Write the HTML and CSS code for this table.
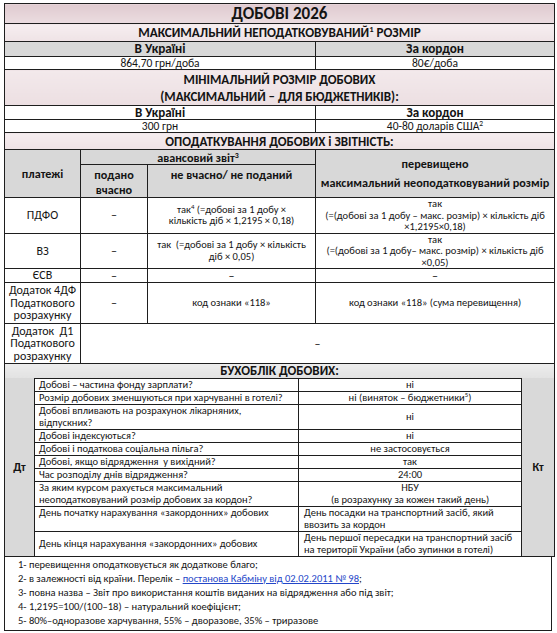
FILE: index.html
```html
<!DOCTYPE html>
<html lang="uk">
<head>
<meta charset="utf-8">
<title>Добові 2026</title>
<link rel="stylesheet" href="styles.css">
</head>
<body>
<div class="sheet">
  <table class="t">
    <colgroup><col class="w-ua"><col class="w-ab"></colgroup>
    <tr class="r-title"><td colspan="2">ДОБОВІ 2026</td></tr>
    <tr class="r-h1"><td colspan="2">МАКСИМАЛЬНИЙ НЕПОДАТКОВУВАНИЙ<sup>1</sup> РОЗМІР</td></tr>
    <tr class="r-grey"><td>В Україні</td><td>За кордон</td></tr>
    <tr class="r-val"><td>864,70 грн/доба</td><td>80€/доба</td></tr>
    <tr class="r-h2"><td colspan="2">МІНІМАЛЬНИЙ РОЗМІР ДОБОВИХ<br>(МАКСИМАЛЬНИЙ – ДЛЯ БЮДЖЕТНИКІВ):</td></tr>
    <tr class="r-sub"><td>В Україні</td><td>За кордон</td></tr>
    <tr class="r-val"><td>300 грн</td><td>40-80 доларів США<sup>2</sup></td></tr>
    <tr class="r-h3"><td colspan="2">ОПОДАТКУВАННЯ ДОБОВИХ і ЗВІТНІСТЬ:</td></tr>
  </table>

  <table class="t tax">
    <colgroup><col class="w-pay"><col class="w-ontime"><col class="w-late"><col class="w-over"></colgroup>
    <tr class="r-th1">
      <td rowspan="2" class="th">платежі</td>
      <td colspan="2" class="th adv">авансовий звіт<sup>3</sup></td>
      <td rowspan="2" class="th over-h"><span class="l1">перевищено</span><span class="l2">максимальний неоподатковуваний розмір</span></td>
    </tr>
    <tr class="r-th2">
      <td class="th top">подано<br>вчасно</td>
      <td class="th top">не вчасно/ не поданий</td>
    </tr>
    <tr class="r-pdfo">
      <td class="name">ПДФО</td>
      <td class="dash">–</td>
      <td class="small">так<sup>4</sup> (=добові за 1 добу ×<br>кількість діб × 1,2195 × 0,18)</td>
      <td class="small">так<br>(=(добові за 1 добу – макс. розмір) × кількість діб<br>×1,2195×0,18)</td>
    </tr>
    <tr class="r-vz">
      <td class="name">ВЗ</td>
      <td class="dash">–</td>
      <td class="small">так &nbsp;(=добові за 1 добу × кількість<br>діб × 0,05)</td>
      <td class="small">так<br>(=(добові за 1 добу– макс. розмір) × кількість діб<br>×0,05)</td>
    </tr>
    <tr class="r-esv">
      <td class="name">ЄСВ</td>
      <td class="dash">–</td>
      <td class="dash">–</td>
      <td class="dash">–</td>
    </tr>
    <tr class="r-4df">
      <td class="name">Додаток 4ДФ Податкового розрахунку</td>
      <td class="dash">–</td>
      <td class="small">код ознаки «118»</td>
      <td class="small">код ознаки «118» (сума перевищення)</td>
    </tr>
    <tr class="r-d1">
      <td class="name">Додаток &nbsp;Д1 Податкового розрахунку</td>
      <td colspan="3" class="dash">–</td>
    </tr>
  </table>

  <table class="t book">
    <colgroup><col class="w-dt"><col class="w-q"><col class="w-a"><col class="w-kt"></colgroup>
    <tr class="r-bh"><td colspan="4">БУХОБЛІК ДОБОВИХ:</td></tr>
    <tr class="r1">
      <td rowspan="10" class="side">Дт</td>
      <td class="q">Добові – частина фонду зарплати?</td>
      <td class="a">ні</td>
      <td rowspan="10" class="side">Кт</td>
    </tr>
    <tr class="r1"><td class="q">Розмір добових зменшуються при харчуванні в готелі?</td><td class="a">ні (виняток – бюджетники<sup>5</sup>)</td></tr>
    <tr class="r2"><td class="q">Добові впливають на розрахунок лікарняних,<br>відпускних?</td><td class="a">ні</td></tr>
    <tr class="r1"><td class="q">Добові індексуються?</td><td class="a">ні</td></tr>
    <tr class="r1"><td class="q">Добові і податкова соціальна пільга?</td><td class="a">не застосовується</td></tr>
    <tr class="r1"><td class="q">Добові, якщо відрядження &nbsp;у вихідний?</td><td class="a">так</td></tr>
    <tr class="r1"><td class="q">Час розподілу днів відрядження?</td><td class="a">24:00</td></tr>
    <tr class="r2"><td class="q">За яким курсом рахується максимальний<br>неоподатковуваний розмір добових за кордон?</td><td class="a">НБУ<br>(в розрахунку за кожен такий день)</td></tr>
    <tr class="r2"><td class="q qtop">День початку нарахування «закордонних» добових</td><td class="a al">День посадки на транспортний засіб, який<br>ввозить за кордон</td></tr>
    <tr class="r2"><td class="q">День кінця нарахування «закордонних» добових</td><td class="a al">День першої пересадки на транспортний засіб<br>на території України (або зупинки в готелі)</td></tr>
  </table>

  <div class="notes">
    <p>1- перевищення оподатковується як додаткове благо;</p>
    <p>2- в залежності від країни. Перелік – <a href="#">постанова Кабміну від 02.02.2011 № 98</a>;</p>
    <p>3- повна назва – Звіт про використання коштів виданих на відрядження або під звіт;</p>
    <p>4- 1,2195=100/(100–18) – натуральний коефіцієнт;</p>
    <p>5- 80%–одноразове харчування, 55% – дворазове, 35% – триразове</p>
  </div>
</div>
</body>
</html>
```

FILE: styles.css
```css
* { box-sizing: border-box; }
html, body { margin: 0; padding: 0; background: #fff; }
body {
  padding: 3px 0 0 4px;
  font-family: Carlito, "Liberation Sans", Arial, sans-serif;
  color: #141414;
  font-size: 11px;
}
.sheet { width: 550px; }

.t {
  width: 100%;
  border-collapse: collapse;
  table-layout: fixed;
}
.t td {
  border: 1px solid #1e1e1e;
  padding: 0 3px;
  text-align: center;
  vertical-align: middle;
  line-height: 12px;
  overflow: hidden;
}
.t + .t tr:first-child > td { border-top: 0; }
sup { font-size: 65%; line-height: 0; vertical-align: 0.6em; }

/* top section */
.w-ua { width: 311px; }
.w-ab { width: 239px; }
.r-title td {
  height: 20px;
  font-size: 17px;
  line-height: 19px;
  font-weight: bold;
  background: linear-gradient(#e0cbd0, #ebdce0);
}
.r-h1 td {
  height: 18px;
  font-size: 13.2px;
  line-height: 16px;
  font-weight: bold;
  background: linear-gradient(#f6eef0, #efe3e6);
}
.r-grey td {
  height: 15px;
  font-size: 13.2px;
  line-height: 14px;
  font-weight: bold;
  background: #d8d8d8;
}
.r-val td { height: 13px; font-size: 11.5px; line-height: 12px; }
.r-h2 td {
  height: 36px;
  font-size: 13px;
  font-weight: bold;
  line-height: 17px;
  background: linear-gradient(#f3e9eb, #ecdfe2);
}
.r-sub td { height: 14px; font-size: 13px; line-height: 13px; font-weight: bold; }
.r-h3 td {
  height: 17px;
  font-size: 13px;
  line-height: 15px;
  font-weight: bold;
  background: linear-gradient(#f5edef, #eee2e5);
}

/* tax section */
.w-pay { width: 76px; }
.w-ontime { width: 67px; }
.w-late { width: 168px; }
.w-over { width: 239px; }
.tax .th {
  background: #d8d8d8;
  font-weight: bold;
  font-size: 12.2px;
  line-height: 14px;
}
.r-th1 td { height: 14px; }
.tax .th.adv { line-height: 13px; padding-top: 1px; overflow: visible; }
.tax .th.adv sup { vertical-align: 0.45em; }
.r-th2 td { height: 33px; }
.tax .th.top { vertical-align: top; padding-top: 2px; line-height: 15px; }
.over-h { padding: 0; }
.over-h .l1, .over-h .l2 { display: block; white-space: nowrap; }
.over-h .l1 { margin-bottom: 5px; }
.tax .name { font-size: 12px; line-height: 12.5px; padding: 0 1px; }
.tax .small { font-size: 10.5px; line-height: 11.5px; padding: 0 1px; }
.tax .dash { font-size: 12px; }
.r-pdfo td { height: 33px; }
.r-vz td { height: 35px; }
.r-esv td { height: 14px; }
.r-4df td { height: 41px; }
.r-d1 td { height: 40px; }

/* bookkeeping */
.w-dt { width: 30px; }
.w-q { width: 264px; }
.w-a { width: 223px; }
.w-kt { width: 33px; }
.r-bh td {
  height: 14px;
  font-size: 13px;
  line-height: 13px;
  font-weight: bold;
  background: linear-gradient(#ececec, #e2e2e2);
  border-bottom: 0;
}
.book .side {
  background: #d9d9d9;
  font-weight: bold;
  font-size: 12px;
  border-top: 0;
}
.book .q { text-align: left; padding-left: 4px; font-size: 10.5px; }
.book .qtop { vertical-align: top; }
.book .a { font-size: 10.5px; }
.book .a.al { text-align: left; padding-left: 5px; }
.book .r1 td { height: 13px; }
.book .r2 td { height: 25px; }

/* footnotes */
.notes {
  border: 1px solid #1e1e1e;
  border-top: 0;
  width: 548px;
  height: 74px;
  padding: 1px 0 0 13px;
  font-size: 10.5px;
}
.notes p { margin: 0; line-height: 14px; white-space: nowrap; }
.notes a { color: #2346c8; text-decoration: underline; }
```
